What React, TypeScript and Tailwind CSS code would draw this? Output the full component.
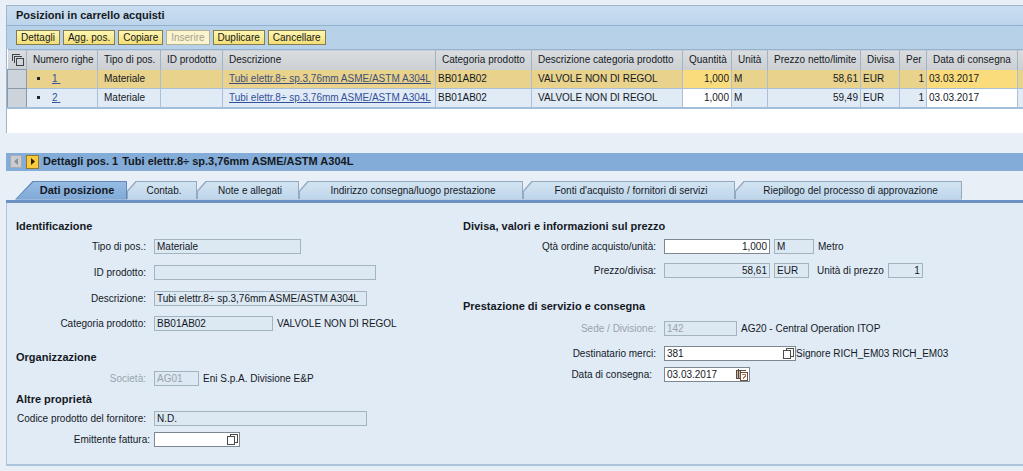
import type { ReactNode } from 'react';
import clsx from 'clsx';

interface Item {
  line: number;
  type: string;
  productId: string;
  description: string;
  category: string;
  categoryDescription: string;
  quantity: string;
  unit: string;
  netPrice: string;
  currency: string;
  per: string;
  deliveryDate: string;
}

const ITEMS: Item[] = [
  {
    line: 1,
    type: 'Materiale',
    productId: '',
    description: 'Tubi elettr.8÷ sp.3,76mm ASME/ASTM A304L',
    category: 'BB01AB02',
    categoryDescription: 'VALVOLE NON DI REGOL',
    quantity: '1,000',
    unit: 'M',
    netPrice: '58,61',
    currency: 'EUR',
    per: '1',
    deliveryDate: '03.03.2017',
  },
  {
    line: 2,
    type: 'Materiale',
    productId: '',
    description: 'Tubi elettr.8÷ sp.3,76mm ASME/ASTM A304L',
    category: 'BB01AB02',
    categoryDescription: 'VALVOLE NON DI REGOL',
    quantity: '1,000',
    unit: 'M',
    netPrice: '59,49',
    currency: 'EUR',
    per: '1',
    deliveryDate: '03.03.2017',
  },
];

const COLUMNS = [
  { label: 'Numero righe', width: 'w-[71px]' },
  { label: 'Tipo di pos.', width: 'w-[63px]' },
  { label: 'ID prodotto', width: 'w-[62px]' },
  { label: 'Descrizione', width: 'w-[213px]' },
  { label: 'Categoria prodotto', width: 'w-[96px]' },
  { label: 'Descrizione categoria prodotto', width: 'w-[151px]' },
  { label: 'Quantità', width: 'w-[49px]' },
  { label: 'Unità', width: 'w-[36px]' },
  { label: 'Prezzo netto/limite', width: 'w-[93px]' },
  { label: 'Divisa', width: 'w-[39px]' },
  { label: 'Per', width: 'w-[27px]' },
  { label: 'Data di consegna', width: 'w-[91px]' },
];

const ACTIONS = [
  { label: 'Dettagli' },
  { label: 'Agg. pos.' },
  { label: 'Copiare' },
  { label: 'Inserire', disabled: true },
  { label: 'Duplicare' },
  { label: 'Cancellare' },
];

const TABS = [
  { label: 'Dati posizione', width: 'w-[112px]', active: true },
  { label: 'Contab.', width: 'w-[70px]' },
  { label: 'Note e allegati', width: 'w-[102px]' },
  { label: 'Indirizzo consegna/luogo prestazione', width: 'w-[224px]' },
  { label: "Fonti d'acquisto / fornitori di servizi", width: 'w-[212px]' },
  { label: 'Riepilogo del processo di approvazione', width: 'w-[227px]' },
];

function SelectAllIcon() {
  return (
    <svg width="12" height="12" viewBox="0 0 12 12" fill="none" stroke="#3c4248" shapeRendering="crispEdges">
      <path d="M0.5 7V0.5H8" />
      <path d="M2.5 9V2.5H10" />
      <rect x="4.5" y="4.5" width="7" height="7" />
    </svg>
  );
}

function ValueHelpIcon() {
  return (
    <svg width="11" height="11" viewBox="0 0 11 11" fill="none" stroke="#4a4a48" shapeRendering="crispEdges">
      <path d="M3.5 3V0.5H10.5V8.5H8" />
      <rect x="0.5" y="2.5" width="7" height="8" />
    </svg>
  );
}

function CalendarIcon() {
  return (
    <svg width="12" height="12" viewBox="0 0 12 12" fill="none" shapeRendering="crispEdges">
      <rect x="0.5" y="1.5" width="4" height="8" fill="#c9b8a5" stroke="#5b4a3f" />
      <path d="M2.5 0V9M4 1.5H10" stroke="#5b4a3f" />
      <rect x="4.5" y="3.5" width="7" height="8" fill="#fff" stroke="#6b4b3d" />
      <path d="M6 5.5H10M9.5 6V7.5M8.5 7V8.5M7.5 8V10" stroke="#b5705a" />
    </svg>
  );
}

function Heading({ children, className }: { children: ReactNode; className?: string }) {
  return <h3 className={clsx('h-4 text-[11px] font-bold leading-[14px]', className)}>{children}</h3>;
}

interface FieldProps {
  id: string;
  label: string;
  value: string;
  width: string;
  height: string;
  labelClass: string;
  mode?: 'readonly' | 'disabled' | 'edit';
  alignRight?: boolean;
  icon?: ReactNode;
  children?: ReactNode;
}

function Field({ id, label, value, width, height, labelClass, mode = 'readonly', alignRight, icon, children }: FieldProps) {
  return (
    <div className={clsx('flex items-center whitespace-nowrap', height)}>
      <label htmlFor={id} className={clsx('shrink-0 text-right', labelClass, mode === 'disabled' && 'text-[#9aa3ab]')}>
        {label}
      </label>
      <div
        className={clsx(
          'flex h-[15px] shrink-0 items-center border',
          width,
          mode === 'edit' ? 'border-[#7d8791] bg-white' : 'border-[#a3b3bf] bg-[#dce8f2]',
        )}
      >
        <input
          id={id}
          defaultValue={value}
          readOnly={mode === 'readonly'}
          disabled={mode === 'disabled'}
          className={clsx(
            'h-full w-full min-w-0 px-0.5 outline-none',
            alignRight && 'text-right',
            mode === 'disabled' && 'text-[#9aa3ab]',
          )}
        />
        {icon && (
          <button type="button" aria-label={`Guida per ${label}`} className="mr-px shrink-0">
            {icon}
          </button>
        )}
      </div>
      {children}
    </div>
  );
}

function ReadonlyBox({ id, value, width, label }: { id: string; value: string; width: string; label?: string }) {
  return (
    <input
      id={id}
      aria-label={label}
      defaultValue={value}
      readOnly
      className={clsx('ml-1 h-[15px] shrink-0 border border-[#a3b3bf] bg-[#dce8f2] px-0.5 outline-none', width)}
    />
  );
}

function ItemRow({ item, selected }: { item: Item; selected: boolean }) {
  const edit = selected ? 'bg-[#fadc7c]' : 'bg-white';
  const cell = 'border-r border-b border-[#a9c0d8] px-0.5';

  return (
    <tr className={clsx('h-[19px]', selected ? 'bg-[#e8d28c]' : 'bg-[#e0ebf6]')}>
      <td className="border border-[#8b98a8] bg-[#cdd3da] p-0">
        <button type="button" aria-label={`Seleziona riga ${item.line}`} className="block h-4 w-full" />
      </td>
      <td className={cell}>
        <div className="flex items-center pl-2">
          <span className="mr-3 h-[3px] w-[3px] bg-[#20252c]" />
          <a href="#" className="text-[#33509c] underline">
            {item.line}&nbsp;
          </a>
        </div>
      </td>
      <td className={clsx(cell, 'pl-1.5')}>{item.type}</td>
      <td className={cell}>{item.productId}</td>
      <td className={clsx(cell, 'pl-1.5')}>
        <a href="#" className={clsx('underline', selected ? 'text-[#3f4f78]' : 'text-[#33509c]')}>
          {item.description}
        </a>
      </td>
      <td className={cell}>{item.category}</td>
      <td className={clsx(cell, 'pl-1.5')}>{item.categoryDescription}</td>
      <td className={clsx(cell, edit)}>
        <input aria-label={`Quantità riga ${item.line}`} defaultValue={item.quantity} className="block w-full text-right outline-none" />
      </td>
      <td className={cell}>{item.unit}</td>
      <td className={clsx(cell, 'text-right')}>{item.netPrice}</td>
      <td className={cell}>{item.currency}</td>
      <td className={clsx(cell, 'text-right')}>{item.per}</td>
      <td className={clsx(cell, edit)}>
        <input aria-label={`Data di consegna riga ${item.line}`} defaultValue={item.deliveryDate} className="block w-full outline-none" />
      </td>
      <td className="border-b border-[#a9c0d8] p-0" />
    </tr>
  );
}

function CartItems() {
  return (
    <section className="border-t border-l border-[#9db6d0] bg-white pb-6">
      <h2 className="h-[19px] bg-linear-to-b from-[#cbdef0] to-[#bcd4ea] pl-[9px] text-[11px] font-bold leading-[19px]">
        Posizioni in carrello acquisti
      </h2>
      <div className="flex h-6 items-center gap-[3px] border-t border-[#93b1d0] bg-[#b7d1e9] pl-[9px]">
        {ACTIONS.map((action) => (
          <button
            key={action.label}
            type="button"
            disabled={action.disabled}
            className={clsx(
              'h-[15px] border px-1 leading-[13px]',
              action.disabled
                ? 'border-[#b5b293] bg-[#faf5cf] text-[#a5a28c]'
                : 'border-[#857c52] bg-linear-to-b from-[#fff6b0] to-[#f3df76]',
            )}
          >
            {action.label}
          </button>
        ))}
      </div>
      <table className="w-full table-fixed border-collapse overflow-hidden whitespace-nowrap border-b-2 border-[#a3bedb]">
        <colgroup>
          <col className="w-[19px]" />
          {COLUMNS.map((column) => (
            <col key={column.label} className={column.width} />
          ))}
          <col />
        </colgroup>
        <thead>
          <tr className="h-5 border-t border-[#93b1d0] bg-linear-to-b from-[#dadddf] to-[#cbcfd3]">
            <th className="border-r border-[#9fb3c9] p-0 pl-1">
              <button type="button" aria-label="Seleziona tutto" className="block">
                <SelectAllIcon />
              </button>
            </th>
            {COLUMNS.map((column) => (
              <th key={column.label} className="border-r border-[#9fb3c9] px-0 pl-1.5 text-left font-normal">
                {column.label}
              </th>
            ))}
            <th className="p-0" />
          </tr>
        </thead>
        <tbody>
          {ITEMS.map((item) => (
            <ItemRow key={item.line} item={item} selected={item.line === 1} />
          ))}
        </tbody>
      </table>
    </section>
  );
}

function Tab({ label, width, active }: { label: string; width: string; active?: boolean }) {
  const shape = active
    ? '[clip-path:polygon(18px_0,100%_0,100%_100%,0_100%)]'
    : '[clip-path:polygon(9px_0,100%_0,100%_100%,0_100%,0_10px)]';

  return (
    <button
      type="button"
      role="tab"
      aria-selected={!!active}
      className={clsx('h-[19px] shrink-0 px-px pt-px', width, shape, active ? 'bg-[#6288b8]' : 'bg-[#93a9c0]')}
    >
      <span
        className={clsx(
          'flex h-full items-center justify-center',
          shape,
          active
            ? 'bg-linear-to-b from-[#96bce4] to-[#7fa9d6] pl-3 text-[11px] font-bold'
            : 'bg-linear-to-b from-[#d3e4f2] to-[#bcd5ea] pl-1',
        )}
      >
        {label}
      </span>
    </button>
  );
}

function ItemForm() {
  const left = 'mr-2 w-[130px]';
  const right = 'mr-2 w-[193px]';

  return (
    <div className="grid grid-cols-[447px_1fr] border-b-2 border-l border-[#adc3dc] bg-[#e0ebf6] pt-4 pb-3.5 pl-[9px]">
      <div>
        <Heading>Identificazione</Heading>
        <Field id="type" label="Tipo di pos.:" value="Materiale" width="w-[147px]" height="h-6" labelClass={left} />
        <Field id="product-id" label="ID prodotto:" value="" width="w-[222px]" height="h-7" labelClass={left} />
        <Field
          id="description"
          label="Descrizione:"
          value="Tubi elettr.8÷ sp.3,76mm ASME/ASTM A304L"
          width="w-[213px]"
          height="h-6"
          labelClass={left}
        />
        <Field id="category" label="Categoria prodotto:" value="BB01AB02" width="w-[119px]" height="h-[26px]" labelClass={left}>
          <span className="ml-1">VALVOLE NON DI REGOL</span>
        </Field>

        <Heading className="mt-[13px]">Organizzazione</Heading>
        <Field id="company" label="Società:" value="AG01" width="w-[45px]" height="h-[26px]" labelClass={left} mode="disabled">
          <span className="ml-1">Eni S.p.A. Divisione E&amp;P</span>
        </Field>

        <Heading>Altre proprietà</Heading>
        <Field
          id="supplier-code"
          label="Codice prodotto del fornitore:"
          value="N.D."
          width="w-[213px]"
          height="h-[22px]"
          labelClass={left}
        />
        <Field
          id="invoice-issuer"
          label="Emittente fattura:"
          value=""
          width="w-[86px]"
          height="h-5"
          labelClass="mr-1 w-[134px]"
          mode="edit"
          icon={<ValueHelpIcon />}
        />
      </div>

      <div>
        <Heading>Divisa, valori e informazioni sul prezzo</Heading>
        <Field
          id="quantity"
          label="Qtà ordine acquisto/unità:"
          value="1,000"
          width="w-[106px]"
          height="h-6"
          labelClass={right}
          mode="edit"
          alignRight
        >
          <ReadonlyBox id="unit" label="Unità" value="M" width="w-10" />
          <span className="ml-1">Metro</span>
        </Field>
        <Field id="price" label="Prezzo/divisa:" value="58,61" width="w-[106px]" height="h-6" labelClass={right} alignRight>
          <ReadonlyBox id="currency" label="Divisa" value="EUR" width="w-[35px]" />
          <label htmlFor="price-unit" className="ml-2">
            Unità di prezzo
          </label>
          <ReadonlyBox id="price-unit" value="1" width="w-[35px] text-right" />
        </Field>

        <Heading className="mt-4">Prestazione di servizio e consegna</Heading>
        <Field id="plant" label="Sede / Divisione:" value="142" width="w-[73px]" height="h-7" labelClass={right} mode="disabled">
          <span className="ml-1">AG20 - Central Operation ITOP</span>
        </Field>
        <Field
          id="recipient"
          label="Destinatario merci:"
          value="381"
          width="w-[132px]"
          height="h-[22px]"
          labelClass={right}
          mode="edit"
          icon={<ValueHelpIcon />}
        >
          <span>Signore RICH_EM03 RICH_EM03</span>
        </Field>
        <Field
          id="delivery-date"
          label="Data di consegna:"
          value="03.03.2017"
          width="w-[86px]"
          height="h-5"
          labelClass="mr-3 w-[189px]"
          mode="edit"
          icon={<CalendarIcon />}
        />
      </div>
    </div>
  );
}

export default function App() {
  return (
    <main className="min-h-screen overflow-x-hidden bg-[#e9eff6] pt-[5px] pb-1 pl-1.5 font-['Liberation_Sans',Arial,sans-serif] text-[10px] leading-[13px] text-[#15191f]">
      <CartItems />

      <section className="mt-5">
        <header className="flex h-[18px] items-center bg-[#83add8] pl-1">
          <button
            type="button"
            disabled
            aria-label="Posizione precedente"
            className="flex h-[13px] w-3 items-center justify-center border border-[#a9adb3] bg-[#c9ccd0]"
          >
            <svg width="4" height="7" viewBox="0 0 4 7" fill="#8d9299">
              <path d="M4 0V7L0 3.5Z" />
            </svg>
          </button>
          <button
            type="button"
            aria-label="Posizione successiva"
            className="ml-1 flex h-[14px] w-[13px] items-center justify-center border border-[#8f7a34] bg-[#fcc93a]"
          >
            <svg width="4" height="7" viewBox="0 0 4 7" fill="#2a2208">
              <path d="M0 0V7L4 3.5Z" />
            </svg>
          </button>
          <h2 className="ml-1 flex gap-1 text-[11px] font-bold">
            <span>Dettagli pos. 1</span>
            <span>Tubi elettr.8÷ sp.3,76mm ASME/ASTM A304L</span>
          </h2>
        </header>

        <div role="tablist" className="mt-2.5 flex border-b-3 border-[#6c92c2] pl-[9px]">
          {TABS.map((tab) => (
            <Tab key={tab.label} {...tab} />
          ))}
        </div>
        <ItemForm />
      </section>
    </main>
  );
}
